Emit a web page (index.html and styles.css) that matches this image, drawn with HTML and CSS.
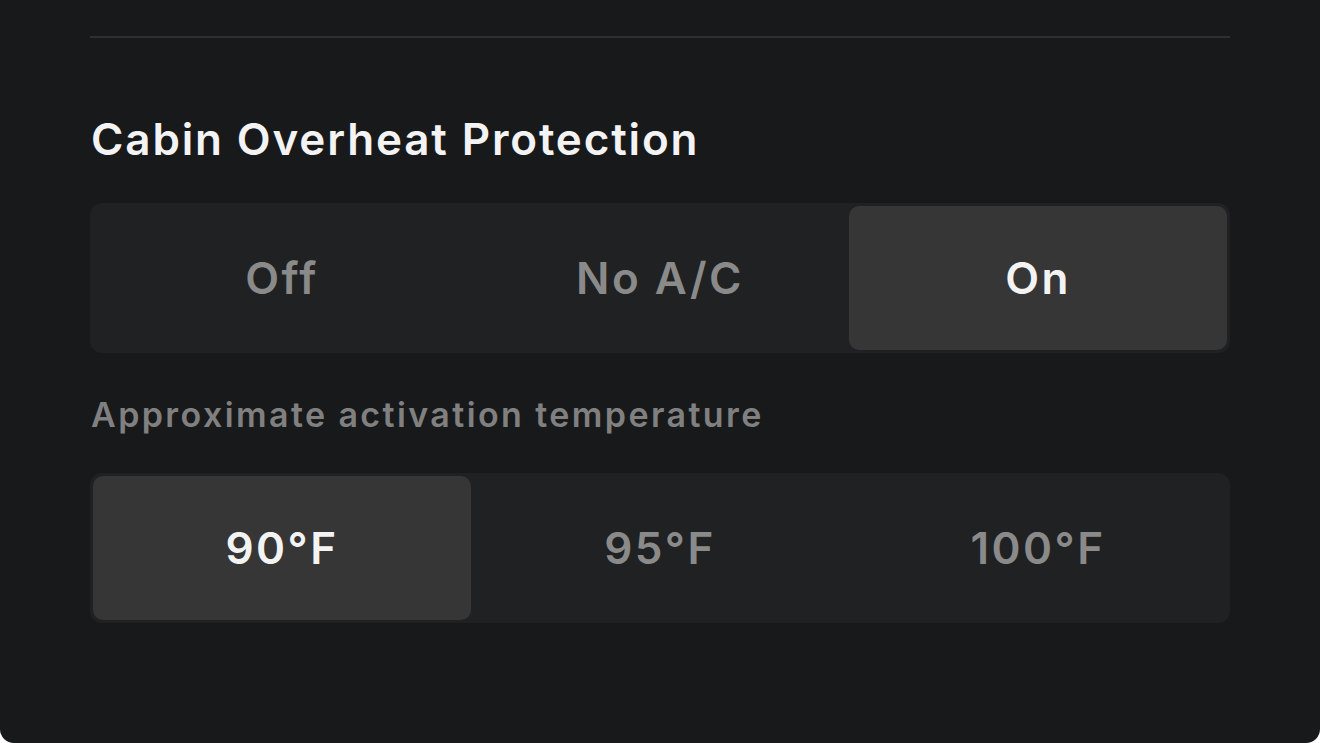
FILE: index.html
```html
<!DOCTYPE html>
<html lang="en">
<head>
<meta charset="utf-8">
<title>Cabin Overheat Protection</title>
<link rel="stylesheet" href="styles.css">
</head>
<body>
<div class="panel">
  <div class="divider"></div>
  <h2 class="title">Cabin Overheat Protection</h2>
  <div class="segmented">
    <div class="seg">Off</div>
    <div class="seg">No A/C</div>
    <div class="seg active">On</div>
  </div>
  <div class="label">Approximate activation temperature</div>
  <div class="segmented">
    <div class="seg active">90°F</div>
    <div class="seg">95°F</div>
    <div class="seg">100°F</div>
  </div>
</div>
</body>
</html>
```
FILE: styles.css
```css
html, body {
  margin: 0;
  padding: 0;
  background: #ffffff;
}
.panel {
  box-sizing: border-box;
  width: 1320px;
  height: 743px;
  background: #18191b;
  border-radius: 0 0 14px 14px;
  padding: 0 90px;
  font-family: "Inter", "Liberation Sans", sans-serif;
  display: flex;
  flex-direction: column;
}
.divider {
  margin-top: 36px;
  height: 2px;
  background: #2e2f31;
}
.title {
  margin: 75px 0 0 1px;
  font-size: 44px;
  line-height: 52px;
  font-weight: 600;
  color: #f3f3f3;
  letter-spacing: 1.85px;
}
.segmented {
  margin-top: 38px;
  height: 150px;
  box-sizing: border-box;
  padding: 3px;
  background: #202122;
  border-radius: 12px;
  display: grid;
  grid-template-columns: 1fr 1fr 1fr;
}
.seg {
  display: flex;
  align-items: center;
  justify-content: center;
  font-size: 44px;
  font-weight: 600;
  letter-spacing: 2.5px;
  color: #8a8a8a;
  border-radius: 10px;
}
.seg.active {
  background: #363636;
  color: #f3f3f3;
}
.label {
  margin: 42px 0 0 1px;
  font-size: 34px;
  line-height: 40px;
  font-weight: 600;
  letter-spacing: 2.4px;
  color: #808080;
}
.label + .segmented {
  margin-top: 38px;
}
```
